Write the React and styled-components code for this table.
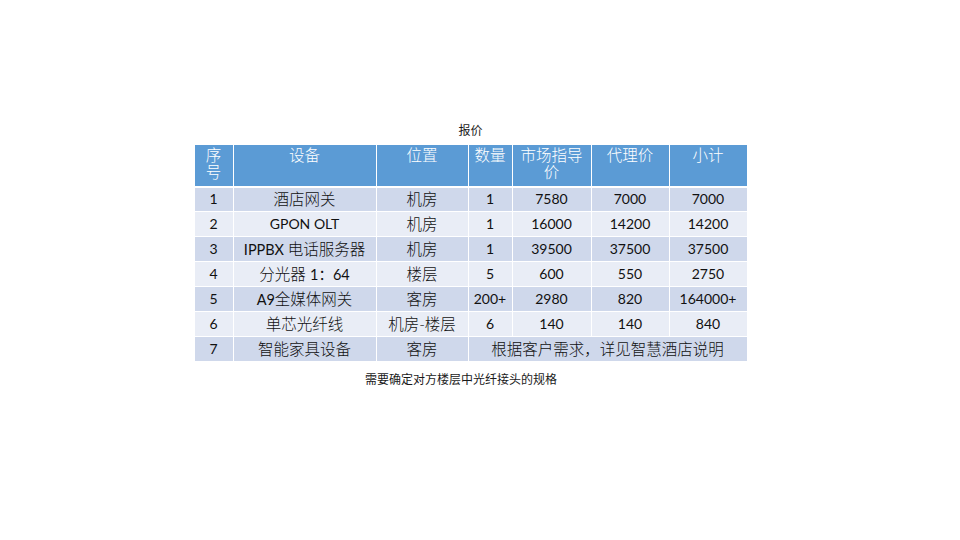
import React from "react";
import styled, { createGlobalStyle } from "styled-components";

const Global = createGlobalStyle`
  html, body { margin: 0; padding: 0; background: #ffffff; }
  body { width: 960px; height: 540px; overflow: hidden; }
`;

const Page = styled.div`
  width: 960px;
  height: 540px;
  box-sizing: border-box;
  padding: 122px 19px 0 0;
  display: flex;
  flex-direction: column;
  align-items: center;
  font-family: "Noto Sans CJK SC", sans-serif;
`;

const Caption = styled.div`
  font-size: 12px;
  line-height: 16px;
  color: #1a1a1a;
  margin-bottom: 6px;
  margin-right: ${(p) => p.$shift || 0}px;
  margin-top: ${(p) => p.$top || 0}px;
`;

const Table = styled.table`
  width: 553px;
  table-layout: fixed;
  border-collapse: collapse;
  font-family: Lato, "Noto Sans CJK SC", sans-serif;
  color: #111;
`;

const HeadCell = styled.th`
  background: #5b9bd5;
  color: #ffffff;
  font-weight: 300;
  font-size: 15.5px;
  line-height: 17px;
  height: 42px;
  box-sizing: border-box;
  padding: 2px 6px 0;
  vertical-align: top;
  text-align: center;
  border: 1px solid #ffffff;
  border-bottom-width: 2px;
`;

const Row = styled.tr`
  background: ${(p) => (p.$odd ? "#cfd8eb" : "#e9edf6")};
`;

const Cell = styled.td`
  height: 25px;
  box-sizing: border-box;
  padding: 0 2px;
  font-size: ${(p) => (p.$cjk ? 15.5 : 14)}px;
  font-weight: ${(p) => (p.$cjk ? 300 : 400)};
  line-height: 20px;
  text-align: center;
  vertical-align: middle;
  border: 1px solid #ffffff;
  white-space: nowrap;
`;

const Latin = styled.span`
  font-size: 14.5px;
  font-weight: 400;
`;

const widths = [39, 143, 92, 44, 79, 78, 78];
const headers = ["序号", "设备", "位置", "数量", "市场指导价", "代理价", "小计"];

const rows = [
  ["1", "酒店网关", "机房", "1", "7580", "7000", "7000"],
  ["2", "GPON OLT", "机房", "1", "16000", "14200", "14200"],
  ["3", ["IPPBX ", "电话服务器"], "机房", "1", "39500", "37500", "37500"],
  ["4", ["", "分光器 ", "1：64"], "楼层", "5", "600", "550", "2750"],
  ["5", ["A9", "全媒体网关"], "客房", "200+", "2980", "820", "164000+"],
  ["6", "单芯光纤线", "机房-楼层", "6", "140", "140", "840"],
];

const isCjk = (s) => /[\u4e00-\u9fff]/.test(s);

function renderContent(c) {
  if (!Array.isArray(c)) return c;
  if (c[0] === "") {
    return (
      <>
        {c[1]}
        <Latin>{c[2]}</Latin>
      </>
    );
  }
  return (
    <>
      <Latin>{c[0]}</Latin>
      {c[1]}
    </>
  );
}

export default function App() {
  return (
    <>
      <Global />
      <Page>
        <Caption>报价</Caption>
        <Table>
          <colgroup>
            {widths.map((w, i) => (
              <col key={i} style={{ width: w }} />
            ))}
          </colgroup>
          <thead>
            <tr>
              {headers.map((h) => (
                <HeadCell key={h}>{h}</HeadCell>
              ))}
            </tr>
          </thead>
          <tbody>
            {rows.map((r, i) => (
              <Row key={i} $odd={i % 2 === 0}>
                {r.map((c, j) => (
                  <Cell key={j} $cjk={Array.isArray(c) || isCjk(c)}>
                    {renderContent(c)}
                  </Cell>
                ))}
              </Row>
            ))}
            <Row $odd>
              <Cell>7</Cell>
              <Cell $cjk>智能家具设备</Cell>
              <Cell $cjk>客房</Cell>
              <Cell $cjk colSpan={4}>
                根据客户需求，详见智慧酒店说明
              </Cell>
            </Row>
          </tbody>
        </Table>
        <Caption $top={9} $shift={19}>
          需要确定对方楼层中光纤接头的规格
        </Caption>
      </Page>
    </>
  );
}
